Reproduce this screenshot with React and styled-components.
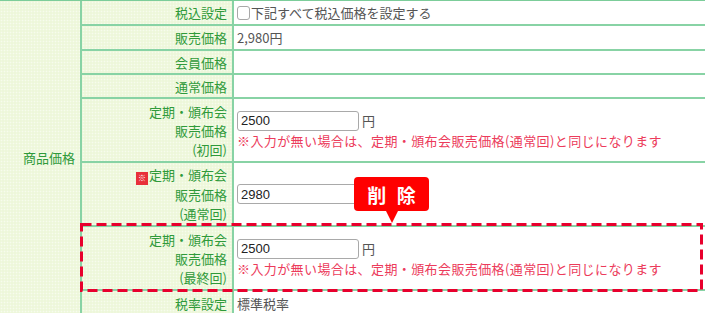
import React from 'react';
import styled, { createGlobalStyle } from 'styled-components';

const Global = createGlobalStyle`
  html, body { margin: 0; padding: 0; background: #fff; }
  body {
    font-family: "Noto Sans CJK JP", "Noto Sans", sans-serif;
    font-size: 13px;
  }
`;

const LINE = '#88d3a5';
const GREEN_TEXT = '#2f9a3a';
const PATTERN = `
  background-color: #edf7da;
  background-image: radial-gradient(circle, #f6fcee 0.7px, transparent 1.1px);
  background-size: 3px 3px;
`;

const Frame = styled.div`
  position: relative;
  width: 705px;
  height: 313px;
  overflow: hidden;
`;

const Table = styled.div`
  display: grid;
  grid-template-columns: 82px 152px 1fr;
  grid-template-rows: 25px 25px 24px 24px 64px 64px 64px 26px;
  border-top: 1px solid #7ccd9a;
`;

const GroupHead = styled.div`
  grid-row: 1 / span 8;
  display: flex;
  align-items: center;
  justify-content: flex-end;
  padding-right: 5px;
  padding-bottom: 4px;
  box-sizing: border-box;
  border-right: 2px solid ${LINE};
  ${PATTERN}
  color: ${GREEN_TEXT};
`;

const Label = styled.div`
  display: flex;
  align-items: center;
  justify-content: flex-end;
  text-align: right;
  padding-right: 5px;
  box-sizing: border-box;
  border-right: 2px solid ${LINE};
  border-bottom: 2px solid ${LINE};
  ${PATTERN}
  color: ${GREEN_TEXT};
  line-height: 19px;
  white-space: nowrap;
`;

const Value = styled.div`
  display: flex;
  flex-direction: column;
  justify-content: center;
  align-items: flex-start;
  padding-left: 3px;
  box-sizing: border-box;
  border-bottom: 2px solid ${LINE};
  color: #555;
  line-height: 19px;
  white-space: nowrap;
`;

const Line = styled.div`
  display: flex;
  align-items: center;
`;

const Check = styled.input.attrs({ type: 'checkbox' })`
  appearance: none;
  margin: 0 1px 0 0;
  width: 13px;
  height: 14px;
  box-sizing: border-box;
  border: 1px solid #a8a8a8;
  border-radius: 3px;
  background: #fff;
`;

const PriceInput = styled.input`
  width: 122px;
  height: 20px;
  box-sizing: border-box;
  margin: 0;
  padding: 0 3px;
  border: 1px solid #a9a9a9;
  border-radius: 3px;
  font-family: "Liberation Sans", Arial, sans-serif;
  font-size: 13px;
  color: #222;
  background: #fff;
`;

const Yen = styled.span`
  margin-left: 3px;
  color: #555;
`;

const Note = styled.div`
  color: #ec3b5b;
  line-height: 19px;
  letter-spacing: 0.4px;
`;

const Required = styled.span`
  display: inline-flex;
  align-items: center;
  justify-content: center;
  width: 12px;
  height: 13px;
  margin-right: 1px;
  background: #e8303a;
  color: #fff;
  font-size: 8px;
  line-height: 1;
  vertical-align: -1px;
`;

const Callout = styled.div`
  position: absolute;
  left: 354px;
  top: 177px;
  width: 75px;
  height: 34px;
  border-radius: 4px;
  background: #ff0000;
  color: #fff;
  font-weight: bold;
  font-size: 19px;
  letter-spacing: 3px;
  display: flex;
  align-items: center;
  justify-content: center;
  padding-left: 3px;
  box-sizing: border-box;
  &::after {
    content: '';
    position: absolute;
    left: 32px;
    bottom: -12px;
    border-left: 6px solid transparent;
    border-right: 6px solid transparent;
    border-top: 12px solid #ff0000;
  }
`;

const Highlight = styled.svg`
  position: absolute;
  left: 80px;
  top: 223px;
  pointer-events: none;
`;

const MultiLabel = ({ lines, required }) => (
  <Label>
    <div>
      {lines.map((l, i) => (
        <div key={i}>
          {i === 0 && required ? <Required>※</Required> : null}
          {l}
        </div>
      ))}
    </div>
  </Label>
);

const NOTE = '※入力が無い場合は、定期・頒布会販売価格(通常回)と同じになります';

export default function App() {
  return (
    <>
      <Global />
      <Frame>
        <Table>
          <GroupHead>商品価格</GroupHead>

          <Label>税込設定</Label>
          <Value>
            <Line>
              <Check />
              下記すべて税込価格を設定する
            </Line>
          </Value>

          <Label>販売価格</Label>
          <Value>2,980円</Value>

          <Label>会員価格</Label>
          <Value />

          <Label>通常価格</Label>
          <Value />

          <MultiLabel lines={['定期・頒布会', '販売価格', '(初回)']} />
          <Value>
            <Line>
              <PriceInput defaultValue="2500" />
              <Yen>円</Yen>
            </Line>
            <Note>{NOTE}</Note>
          </Value>

          <MultiLabel lines={['定期・頒布会', '販売価格', '(通常回)']} required />
          <Value>
            <Line>
              <PriceInput defaultValue="2980" />
            </Line>
          </Value>

          <MultiLabel lines={['定期・頒布会', '販売価格', '(最終回)']} />
          <Value>
            <Line>
              <PriceInput defaultValue="2500" />
              <Yen>円</Yen>
            </Line>
            <Note>{NOTE}</Note>
          </Value>

          <Label>税率設定</Label>
          <Value>標準税率</Value>
        </Table>

        <Highlight width="623" height="69" viewBox="0 0 623 69">
          <rect
            x="1.5"
            y="1.5"
            width="620"
            height="66"
            fill="none"
            stroke="#e8002d"
            strokeWidth="3"
            strokeDasharray="10 5"
          />
        </Highlight>

        <Callout>削 除</Callout>
      </Frame>
    </>
  );
}
